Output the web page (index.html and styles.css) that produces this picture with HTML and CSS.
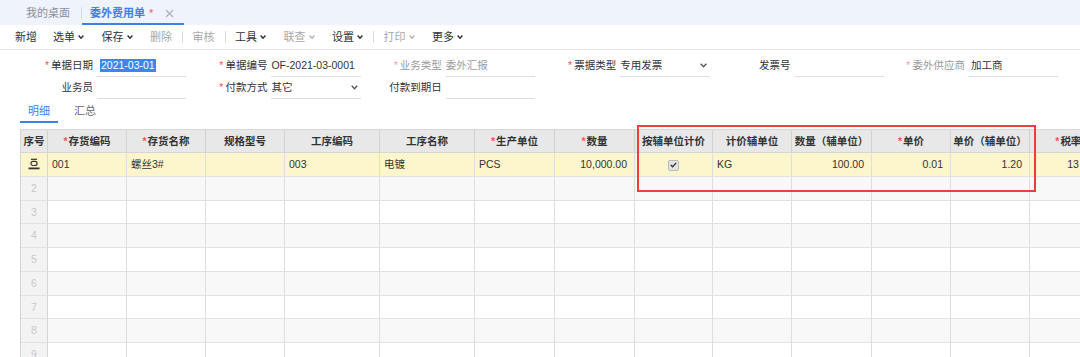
FILE: index.html
```html
<!DOCTYPE html>
<html lang="zh-CN">
<head>
  <meta charset="UTF-8" />
  <title>委外费用单</title>
  <link rel="stylesheet" href="styles.css">
</head>
<body>
  <div class="tabbar">
    <div class="tab tab-home">我的桌面</div>
    <div class="tab tab-active">委外费用单<span class="dirty">*</span>
      <svg class="close" width="9" height="9" viewBox="0 0 9 9"><path d="M1 1l7 7M8 1l-7 7" stroke="#a9b0bb" stroke-width="1.1" fill="none"/></svg>
    </div>
  </div>

  <div class="toolbar">
    <span class="tool">新增</span>
    <span class="tool drop">选单<svg class="chev" width="6" height="4" viewBox="0 0 6 4"><path d="M0.6 0.6L3 3.2 5.4 0.6" /></svg></span>
    <span class="tool drop">保存<svg class="chev" width="6" height="4" viewBox="0 0 6 4"><path d="M0.6 0.6L3 3.2 5.4 0.6" /></svg></span>
    <span class="tool off pre-sep">删除</span>
    <span class="sep"></span>
    <span class="tool off pre-sep">审核</span>
    <span class="sep"></span>
    <span class="tool drop">工具<svg class="chev" width="6" height="4" viewBox="0 0 6 4"><path d="M0.6 0.6L3 3.2 5.4 0.6" /></svg></span>
    <span class="tool drop off">联查<svg class="chev" width="6" height="4" viewBox="0 0 6 4"><path d="M0.6 0.6L3 3.2 5.4 0.6" /></svg></span>
    <span class="tool drop pre-sep">设置<svg class="chev" width="6" height="4" viewBox="0 0 6 4"><path d="M0.6 0.6L3 3.2 5.4 0.6" /></svg></span>
    <span class="sep"></span>
    <span class="tool drop off">打印<svg class="chev" width="6" height="4" viewBox="0 0 6 4"><path d="M0.6 0.6L3 3.2 5.4 0.6" /></svg></span>
    <span class="tool drop">更多<svg class="chev" width="6" height="4" viewBox="0 0 6 4"><path d="M0.6 0.6L3 3.2 5.4 0.6" /></svg></span>
  </div>

  <div class="form">
    <div class="field">
      <label><i class="req">*</i>单据日期</label>
      <div class="inp"><span class="sel">2021-03-01</span></div>
    </div>
    <div class="field">
      <label><i class="req">*</i>单据编号</label>
      <div class="inp">OF-2021-03-0001</div>
    </div>
    <div class="field dim">
      <label><i class="req">*</i>业务类型</label>
      <div class="inp">委外汇报</div>
    </div>
    <div class="field">
      <label><i class="req">*</i>票据类型</label>
      <div class="inp">专用发票<svg class="chev" width="7" height="5" viewBox="0 0 7 5"><path d="M0.7 0.7L3.5 3.8 6.3 0.7" /></svg></div>
    </div>
    <div class="field">
      <label>发票号</label>
      <div class="inp"></div>
    </div>
    <div class="field dim">
      <label><i class="req">*</i>委外供应商</label>
      <div class="inp val">加工商</div>
    </div>
    <div class="field">
      <label>业务员</label>
      <div class="inp"></div>
    </div>
    <div class="field">
      <label><i class="req">*</i>付款方式</label>
      <div class="inp">其它<svg class="chev" width="7" height="5" viewBox="0 0 7 5"><path d="M0.7 0.7L3.5 3.8 6.3 0.7" /></svg></div>
    </div>
    <div class="field">
      <label>付款到期日</label>
      <div class="inp"></div>
    </div>
  </div>

  <div class="subtabs">
    <span class="subtab on">明细</span>
    <span class="subtab">汇总</span>
  </div>

  <div class="sheet">
    <div class="sheet-head">
      <div>序号</div>
      <div><i class="req">*</i>存货编码</div>
      <div><i class="req">*</i>存货名称</div>
      <div>规格型号</div>
      <div>工序编码</div>
      <div>工序名称</div>
      <div><i class="req">*</i>生产单位</div>
      <div><i class="req">*</i>数量</div>
      <div>按辅单位计价</div>
      <div>计价辅单位</div>
      <div>数量（辅单位）</div>
      <div><i class="req">*</i>单价</div>
      <div>单价（辅单位）</div>
      <div><i class="req">*</i>税率%</div>
    </div>
    <div class="sheet-row current">
      <div class="no">
        <svg width="12" height="12" viewBox="0 0 12 12"><path d="M3 1.3h6" stroke="#333" stroke-width="1.2"/><rect x="3" y="3.3" width="6" height="4.2" rx="2" fill="none" stroke="#333" stroke-width="1.2"/><path d="M0.5 10.4h11" stroke="#333" stroke-width="1.8"/></svg>
      </div>
      <div>001</div>
      <div>螺丝3#</div>
      <div></div>
      <div>003</div>
      <div>电镀</div>
      <div>PCS</div>
      <div class="r">10,000.00</div>
      <div class="c"><span class="chk"><svg width="7" height="6" viewBox="0 0 7 6"><path d="M0.8 3l1.8 1.8L6.2 0.9" stroke="#333" stroke-width="1.3" fill="none"/></svg></span></div>
      <div>KG</div>
      <div class="r">100.00</div>
      <div class="r">0.01</div>
      <div class="r">1.20</div>
      <div class="c">13</div>
    </div>
    <div class="sheet-row"><div class="no">2</div><div></div><div></div><div></div><div></div><div></div><div></div><div></div><div></div><div></div><div></div><div></div><div></div><div></div></div>
    <div class="sheet-row"><div class="no">3</div><div></div><div></div><div></div><div></div><div></div><div></div><div></div><div></div><div></div><div></div><div></div><div></div><div></div></div>
    <div class="sheet-row"><div class="no">4</div><div></div><div></div><div></div><div></div><div></div><div></div><div></div><div></div><div></div><div></div><div></div><div></div><div></div></div>
    <div class="sheet-row"><div class="no">5</div><div></div><div></div><div></div><div></div><div></div><div></div><div></div><div></div><div></div><div></div><div></div><div></div><div></div></div>
    <div class="sheet-row"><div class="no">6</div><div></div><div></div><div></div><div></div><div></div><div></div><div></div><div></div><div></div><div></div><div></div><div></div><div></div></div>
    <div class="sheet-row"><div class="no">7</div><div></div><div></div><div></div><div></div><div></div><div></div><div></div><div></div><div></div><div></div><div></div><div></div><div></div></div>
    <div class="sheet-row"><div class="no">8</div><div></div><div></div><div></div><div></div><div></div><div></div><div></div><div></div><div></div><div></div><div></div><div></div><div></div></div>
    <div class="sheet-row"><div class="no">9</div><div></div><div></div><div></div><div></div><div></div><div></div><div></div><div></div><div></div><div></div><div></div><div></div><div></div></div>
  </div>

  <!-- annotation box over the auxiliary unit columns -->
  <div class="mark"></div>
</body>
</html>
```

FILE: styles.css
```css
* {
  box-sizing: border-box;
}
html,
body {
  margin: 0;
  overflow: hidden;
}
body {
  width: 1080px;
  height: 357px;
  background: #fff;
  color: #333;
  font-family: "Liberation Sans", "Noto Sans CJK SC", sans-serif;
  font-size: 10.5px;
}
i.req {
  font-style: normal;
  color: #f4545a;
  margin-right: 2px;
}

/* top tabs */
.tabbar {
  display: flex;
  height: 25px;
  padding-left: 16px;
  background: #eef3fc;
}
.tab {
  position: relative;
  display: flex;
  align-items: flex-start;
  padding: 4px 12px 0 10px;
  line-height: 19px;
  font-size: 11px;
  color: #8a8f98;
  border-bottom: 2px solid transparent;
}
.tab-home::after {
  content: "";
  position: absolute;
  right: 0;
  top: 7px;
  width: 1px;
  height: 12px;
  background: #d6dce6;
}
.tab-active {
  padding: 4px 10px 0 8px;
  color: #3c80ea;
  font-weight: bold;
  border-bottom-color: #3c80ea;
}
.tab-active .dirty {
  margin-left: 4px;
  font-weight: normal;
  color: #f4545a;
}
.tab-active .close {
  margin: 5px 0 0 12px;
}

/* toolbar */
.toolbar {
  display: flex;
  align-items: center;
  height: 25px;
  padding-left: 15px;
  border-bottom: 1px solid #e4e4e4;
  font-size: 11px;
  line-height: 24px;
}
.tool {
  margin-right: 16px;
}
.tool.drop {
  display: flex;
  align-items: center;
  margin-right: 17.5px;
}
.tool.pre-sep {
  margin-right: 10px;
}
.tool.off {
  color: #a8a8a8;
}
.chev {
  margin-left: 3px;
}
.chev path {
  fill: none;
  stroke: #333;
  stroke-width: 1.5;
}
.tool.off .chev path {
  stroke: #b5b5b5;
}
.sep {
  width: 1px;
  height: 12px;
  margin-right: 9.5px;
  background: #dcdcdc;
}

/* header form */
.form {
  display: grid;
  grid-template-columns: repeat(6, 174.4px);
  padding: 5px 0 0 12px;
}
.field {
  display: flex;
  height: 22px;
}
.field label {
  width: 81px;
  margin-right: 4px;
  text-align: right;
  line-height: 21px;
  white-space: nowrap;
}
.inp {
  flex: 1;
  display: flex;
  align-items: center;
  justify-content: space-between;
  padding-right: 3px;
  line-height: 21px;
  border-bottom: 1px solid #dedede;
  white-space: nowrap;
}
.inp .chev path {
  stroke: #555;
  stroke-width: 1.3;
}
.field.dim label,
.field.dim .inp {
  color: #9a9a9a;
}
.field.dim .req {
  color: #f7a0a3;
}
.field.dim .inp.val {
  color: #333;
  padding-left: 2px;
}
.sel {
  margin-left: 3px;
  padding: 0 1px;
  line-height: 13px;
  background: #3d86f2;
  color: #fff;
}

/* detail / summary tabs */
.subtabs {
  display: flex;
  margin: 2px 0 0 20px;
  font-size: 11px;
}
.subtab {
  padding: 0 8px;
  line-height: 20px;
  color: #666;
  border-bottom: 2px solid transparent;
}
.subtab + .subtab {
  margin-left: 8px;
}
.subtab.on {
  color: #3c80ea;
  border-bottom-color: #3c80ea;
}

/* grid */
.sheet {
  margin-top: 6px;
}
.sheet-head,
.sheet-row {
  display: grid;
  grid-template-columns: 27px 79px 79px 79px 95px 95px 80px 80px 78px 79px 80px 79px 79px 87px;
  width: 1097px;
  margin-left: 20px;
  border-left: 1px solid #d4d4d4;
}
.sheet-head {
  border-top: 1px solid #d8d8d8;
  background: #e8e8e8;
}
.sheet-head div {
  height: 23px;
  line-height: 22px;
  text-align: center;
  font-weight: bold;
  color: #333;
  white-space: nowrap;
  border-right: 1px solid #d2d2d2;
  border-bottom: 1px solid #d6d6d6;
}
.sheet-head .req {
  margin-right: 1px;
}
.sheet-row div {
  height: 23.75px;
  padding: 0 4px;
  line-height: 22.75px;
  white-space: nowrap;
  border-right: 1px solid #dedede;
  border-bottom: 1px solid #e2e2e2;
}
.sheet-row:nth-child(odd) {
  background: #f8f8f8;
}
.sheet-row:nth-child(even) {
  background: #fff;
}
.sheet-row.current {
  background: #fdf5cb;
}
.sheet-row .no {
  display: flex;
  align-items: center;
  justify-content: center;
  padding: 0;
  color: #c8c8c8;
  background: #f3f3f3;
  border-right-color: #d4d4d4;
}
.sheet-row.current .no {
  background: #fdf5cb;
}
.sheet-row .r {
  padding-right: 7px;
  text-align: right;
}
.sheet-row .c {
  text-align: center;
}
.chk {
  display: inline-flex;
  align-items: center;
  justify-content: center;
  width: 11px;
  height: 11px;
  vertical-align: middle;
  background: #e3e3e3;
  border: 1px solid #b9b9b9;
  border-radius: 2px;
}

.mark {
  position: absolute;
  left: 637px;
  top: 125px;
  width: 399px;
  height: 67px;
  border: 2px solid #f03c3c;
}
```
